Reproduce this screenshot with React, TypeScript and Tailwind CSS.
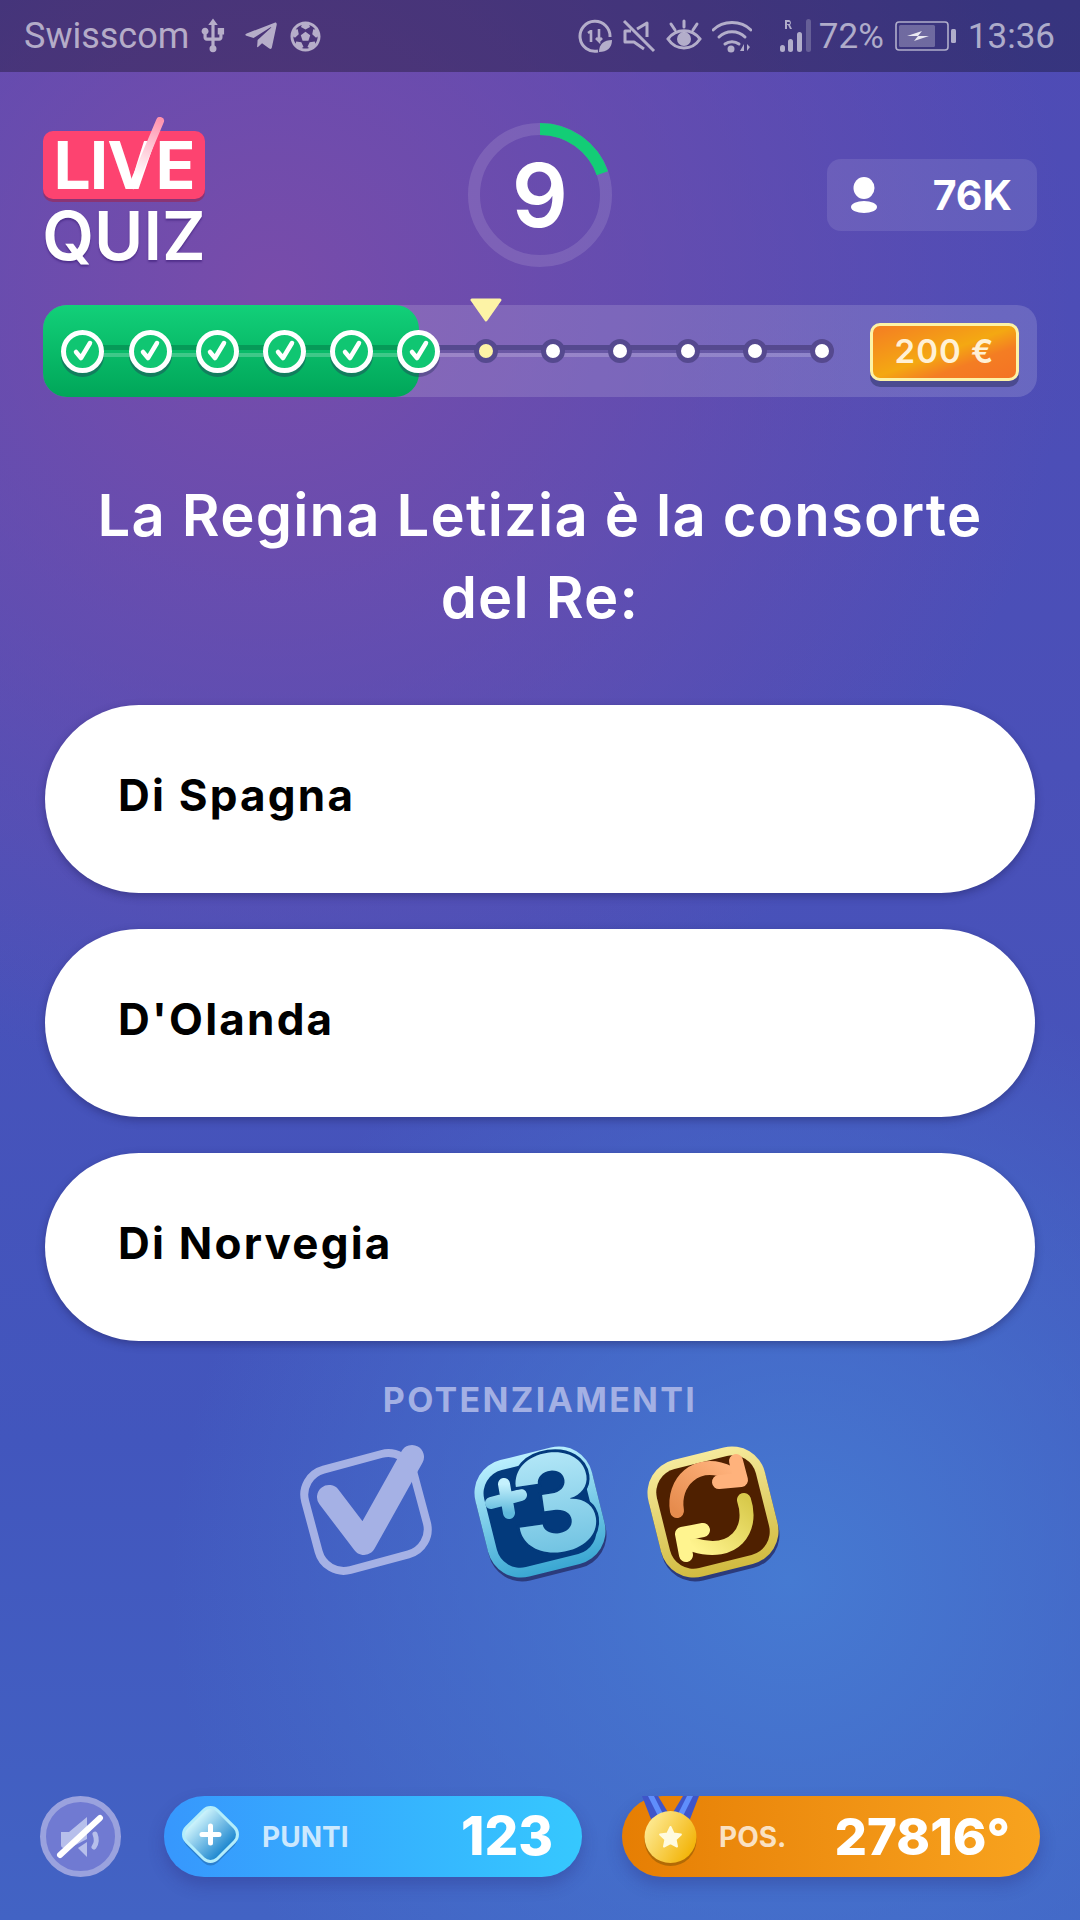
import { FaTelegramPlane, FaFutbol } from "react-icons/fa";
import { MdUsb } from "react-icons/md";

const doneSteps = [0, 1, 2, 3, 4, 5];
const openSteps = [6, 7, 8, 9, 10, 11];
const answers = ["Di Spagna", "D'Olanda", "Di Norvegia"];

function StatusBar() {
  return (
    <div className="h-[72px] shrink-0 bg-black/30 flex items-center pl-[24px] pr-[25px] text-white/60 font-['Roboto',sans-serif] text-[36px]">
      <span className="leading-none">Swisscom</span>
      <MdUsb className="ml-[5px] text-[38px] -mx-[1px]" />
      <FaTelegramPlane className="ml-[12px] text-[36px]" />
      <FaFutbol className="ml-[11px] text-[31px]" />
      <div className="ml-auto flex items-center text-[35px]">
        <svg width="35" height="35" viewBox="0 0 35 35" fill="none" stroke="currentColor" strokeWidth="3">
          <path d="M20 32A15 15 0 1 1 32 18" />
          <path d="M13 12l-3 2M13 11v12M21 10v12l-3-3M21 22l3-3" strokeWidth="2.6" />
          <path d="M21 33c0-8 5-12 13-12 0 8-5 12-13 12z" fill="currentColor" stroke="none" />
        </svg>
        <svg className="ml-[9px]" width="34" height="34" viewBox="0 0 34 34" fill="none" stroke="currentColor" strokeWidth="3">
          <path d="M2 2l30 30" />
          <path d="M9 12H3v11h9l10 7M25 18V4l-10 6" strokeLinejoin="round" />
        </svg>
        <svg className="ml-[10px]" width="36" height="34" viewBox="0 0 36 34" fill="none" stroke="currentColor" strokeWidth="3">
          <path d="M2 20c8-11 24-11 32 0-8 12-24 12-32 0z" />
          <circle cx="18" cy="20" r="7" fill="currentColor" stroke="none" />
          <path d="M18 2v6M5 5l4 6M31 5l-4 6" strokeLinecap="round" />
        </svg>
        <svg className="ml-[10px]" width="40" height="34" viewBox="0 0 40 34" fill="none" stroke="currentColor" strokeWidth="3" strokeLinecap="round">
          <path d="M1 11c10-10 28-10 38 0" />
          <path d="M7 18c7-7 19-7 26 0" />
          <path d="M13 25c4-3 10-3 14 0" />
          <circle cx="19" cy="30" r="3.5" fill="currentColor" stroke="none" />
          <path d="M28 32l4-7v7zM35 25v7l3-4z" fill="currentColor" stroke="none" />
        </svg>
        <svg className="ml-[27px]" width="36" height="34" viewBox="0 0 36 34" fill="currentColor">
          <rect x="1" y="26" width="5" height="7" rx="2.5" />
          <rect x="9" y="20" width="5" height="13" rx="2.5" />
          <rect x="18" y="13" width="5" height="20" rx="2.5" />
          <rect x="27" y="0" width="5" height="33" rx="2.5" opacity="0.35" />
          <path d="M6 1h4a3 3 0 0 1 1 5l2 4h-2l-2-4H8v4H6zM8 3v2h2a1 1 0 0 0 0-2z" />
        </svg>
        <span className="ml-[4px] leading-none">72%</span>
        <svg className="ml-[11px]" width="61" height="30" viewBox="0 0 61 30" fill="none">
          <rect x="1" y="1" width="52" height="28" rx="3" stroke="currentColor" strokeWidth="1.6" />
          <rect x="4" y="4" width="36" height="22" rx="1.5" fill="currentColor" opacity="0.45" />
          <rect x="56" y="8" width="5" height="14" rx="1.5" fill="currentColor" />
          <path d="M12 15l15-5-4 5 11 0-15 5 4-5z" fill="#ffffff" opacity="0.85" />
        </svg>
        <span className="ml-[12px] leading-none">13:36</span>
      </div>
    </div>
  );
}

function Logo() {
  return (
    <div className="relative -my-[6px] w-[162px] h-[156px] pt-[14px] flex flex-col items-center text-white font-bold">
      <div className="w-full h-[68px] rounded-[10px] bg-[#fd4370] shadow-[0_3px_0_#8b3474] flex items-center justify-center text-[66px] leading-none tracking-[-1px]">
        LIVE
      </div>
      <div className="mt-[4px] text-[67px] leading-[66px] font-semibold tracking-[0px] [text-shadow:0_2px_2px_rgba(50,20,110,0.5)]">QUIZ</div>
      <svg className="absolute left-[80px] top-0" width="50" height="80" viewBox="0 0 50 80" fill="none">
        <defs>
          <linearGradient id="tick" x1="38" y1="0" x2="10" y2="70" gradientUnits="userSpaceOnUse">
            <stop offset="0" stopColor="#ff8fab" />
            <stop offset="0.85" stopColor="#ffffff" />
          </linearGradient>
        </defs>
        <path d="M37 4L10 68" stroke="url(#tick)" strokeWidth="8" strokeLinecap="round" />
      </svg>
    </div>
  );
}

function Timer() {
  return (
    <div className="relative w-[144px] h-[144px] flex items-center justify-center">
      <svg className="absolute inset-0 -rotate-90" width="144" height="144" viewBox="0 0 144 144" fill="none">
        <circle cx="72" cy="72" r="66" stroke="#ffffff" strokeOpacity="0.12" strokeWidth="12" />
        <circle cx="72" cy="72" r="66" stroke="#13cd76" strokeWidth="12" strokeDasharray="81.4 400" />
      </svg>
      <span className="text-white text-[88px] leading-none font-semibold">9</span>
    </div>
  );
}

function DoneStep() {
  return (
    <div className="w-[67.2px] flex justify-center">
      <div className="w-[43px] h-[43px] rounded-full border-[5px] border-white bg-[#10c672] shadow-[0_4px_0_rgba(40,50,90,0.4)] flex items-center justify-center">
        <svg width="26" height="26" viewBox="0 0 26 26" fill="none" stroke="#ffffff" strokeWidth="4.5" strokeLinecap="round" strokeLinejoin="round">
          <path d="M6 14l5 6 9-15" />
        </svg>
      </div>
    </div>
  );
}

function OpenStep({ current }: { current: boolean }) {
  return (
    <div className="w-[67.2px] flex justify-center">
      <div className={current ? "w-[24px] h-[24px] rounded-full border-[5px] border-[#55498f] bg-[#fdf3a6]" : "w-[24px] h-[24px] rounded-full border-[5px] border-[#55498f] bg-white"} />
    </div>
  );
}

function ProgressBar() {
  return (
    <div className="relative mt-[38px] mx-[43px] h-[92px] rounded-l-[24px] rounded-r-[20px] bg-white/15 flex items-center pl-[6.4px] pr-[18px]">
      <div className="absolute left-0 top-0 bottom-0 w-[376px] rounded-[24px] bg-gradient-to-b from-[#12d079] to-[#01a659]">
        <div className="absolute left-[40px] right-0 top-[40px] h-[12px] bg-[linear-gradient(#069a58_0_5px,transparent_5px_8px,rgba(255,255,255,0.22)_8px_12px)]" />
      </div>
      <div className="absolute left-[376px] w-[402px] top-[40px] h-[12px] bg-[linear-gradient(#55498f_0_5px,rgba(85,73,143,0.5)_5px_8px,rgba(255,255,255,0.2)_8px_12px)]" />
      <svg className="absolute left-[426px] -top-[7px]" width="34" height="24" viewBox="0 0 34 24">
        <path d="M3 2h28L17 22z" fill="#fdf3a6" stroke="#fdf3a6" strokeWidth="3" strokeLinejoin="round" />
      </svg>
      <div className="relative flex items-center">
        {doneSteps.map((s) => (
          <DoneStep key={s} />
        ))}
        {openSteps.map((s) => (
          <OpenStep key={s} current={s === 6} />
        ))}
      </div>
      <div className="relative ml-auto mt-[2px] w-[149px] h-[58px] rounded-[10px] border-[3px] border-[#fdf3a6] bg-[linear-gradient(160deg,#f47d23_0%,#f4a812_50%,#f47d23_70%,#f47324_100%)] shadow-[0_6px_0_#4b4a90] flex items-center justify-center text-[#fff1d6] text-[33px] font-semibold tracking-[1px]">
        200 €
      </div>
    </div>
  );
}

function CheckPower() {
  return (
    <svg width="135" height="135" viewBox="0 0 135 135" fill="none" stroke="#a5b1e5" className="overflow-visible">
      <rect x="-56" y="-52" width="112" height="104" rx="26" transform="translate(67 67) rotate(-15)" strokeWidth="8" />
      <path d="M30 52L65 98L113 12" strokeWidth="24" strokeLinecap="round" strokeLinejoin="round" />
    </svg>
  );
}

function PlusThreePower() {
  return (
    <svg width="135" height="140" viewBox="0 0 135 140" fill="none" className="overflow-visible">
      <defs>
        <linearGradient id="blueRim" x1="0" y1="0" x2="0" y2="1">
          <stop offset="0" stopColor="#b9effe" />
          <stop offset="1" stopColor="#3aa7d2" />
        </linearGradient>
        <linearGradient id="blueNum" x1="0" y1="0" x2="0" y2="1">
          <stop offset="0" stopColor="#c5f1fd" />
          <stop offset="1" stopColor="#5fb9dc" />
        </linearGradient>
      </defs>
      <g transform="translate(67 67) rotate(-14)">
        <rect x="-60" y="-56" width="120" height="120" rx="34" fill="#2b3b7c" />
        <rect x="-60" y="-60" width="120" height="120" rx="34" fill="url(#blueRim)" />
        <rect x="-51" y="-50" width="102" height="100" rx="24" fill="#033a7c" />
      </g>
      <path d="M18 58L48 50M31 39L36 68" stroke="url(#blueNum)" strokeWidth="12" strokeLinecap="round" />
      <text x="82" y="106" transform="rotate(-8 82 58)" textAnchor="middle" fontFamily="Inter, sans-serif" fontWeight="800" fontSize="134" fill="url(#blueNum)" stroke="#033a7c" strokeWidth="6" paintOrder="stroke">3</text>
    </svg>
  );
}

function RefreshPower() {
  return (
    <svg width="135" height="140" viewBox="0 0 135 140" fill="none" className="overflow-visible">
      <defs>
        <linearGradient id="goldRim" x1="0" y1="0" x2="0" y2="1">
          <stop offset="0" stopColor="#f6ea9c" />
          <stop offset="1" stopColor="#d1bb40" />
        </linearGradient>
        <linearGradient id="orangeArrow" x1="0" y1="1" x2="1" y2="0">
          <stop offset="0" stopColor="#e68c4e" />
          <stop offset="1" stopColor="#ffb27c" />
        </linearGradient>
        <linearGradient id="yellowArrow" x1="1" y1="0" x2="0" y2="1">
          <stop offset="0" stopColor="#d9ca4c" />
          <stop offset="1" stopColor="#fff48f" />
        </linearGradient>
      </defs>
      <g transform="translate(67 67) rotate(-14)">
        <rect x="-60" y="-56" width="120" height="120" rx="34" fill="#2b3b7c" />
        <rect x="-60" y="-60" width="120" height="120" rx="34" fill="url(#goldRim)" />
        <rect x="-51" y="-51" width="102" height="102" rx="24" fill="#4f2000" />
      </g>
      <path d="M31 66C26 38 50 12 84 28" stroke="url(#orangeArrow)" strokeWidth="14" strokeLinecap="round" />
      <path d="M90 16L95 35L73 37" stroke="#ffb27c" strokeWidth="14" strokeLinecap="round" strokeLinejoin="round" />
      <path d="M98 55C108 85 88 112 48 100" stroke="url(#yellowArrow)" strokeWidth="14" strokeLinecap="round" />
      <path d="M57 85L36 89L40 110" stroke="#fff48f" strokeWidth="14" strokeLinecap="round" strokeLinejoin="round" />
    </svg>
  );
}

function MuteButton() {
  return (
    <div className="w-[81px] h-[81px] rounded-full border-[6px] border-[#9aa2de] bg-[#707ad2] flex items-center justify-center shrink-0">
      <svg width="50" height="50" viewBox="0 0 50 50" fill="none">
        <path d="M5 20h8L31 5v22L14 36H8a3 3 0 0 1-3-3z" fill="#b7bfeb" />
        <path d="M22 36l9-6v15z" fill="#b7bfeb" />
        <path d="M39 22c2 5 2 9-1 13" stroke="#b7bfeb" strokeWidth="5" strokeLinecap="round" />
        <path d="M4 43L44 6" stroke="#ffffff" strokeWidth="6" strokeLinecap="round" />
      </svg>
    </div>
  );
}

function GemIcon() {
  return (
    <svg width="57" height="64" viewBox="0 0 57 64" fill="none" className="shrink-0 mt-[3px]">
      <defs>
        <linearGradient id="gem" x1="0" y1="0" x2="1" y2="0">
          <stop offset="0" stopColor="#d3f7fd" />
          <stop offset="1" stopColor="#1a85cf" />
        </linearGradient>
      </defs>
      <rect x="6.5" y="10.5" width="44" height="44" rx="10" transform="rotate(45 28.5 32.5)" fill="#2b7fcf" />
      <rect x="6.5" y="6.5" width="44" height="44" rx="10" transform="rotate(45 28.5 28.5)" fill="url(#gem)" stroke="#b3edfb" strokeWidth="3" />
      <path d="M28.5 20v17M20 28.5h17" stroke="#ffffff" strokeWidth="5" strokeLinecap="round" />
    </svg>
  );
}

function MedalIcon() {
  return (
    <svg width="57" height="81" viewBox="0 0 57 81" fill="none" className="shrink-0">
      <defs>
        <linearGradient id="coin" x1="0" y1="0" x2="1" y2="0.6">
          <stop offset="0" stopColor="#fff2a8" />
          <stop offset="1" stopColor="#f3b50b" />
        </linearGradient>
      </defs>
      <path d="M0 0h16l22 36H14z" fill="#3f55c9" />
      <path d="M57 0H41L19 36h24z" fill="#3f55c9" />
      <path d="M6 0h6l15 30h-6zM51 0h-6L30 30h6z" fill="#5f8efc" />
      <circle cx="28.5" cy="44" r="26" fill="#b36a05" />
      <circle cx="28.5" cy="41" r="26" fill="url(#coin)" />
      <path d="M28.5 31l3.2 6.6 7.2.9-5.3 4.9 1.4 7.1-6.5-3.5-6.5 3.5 1.4-7.1-5.3-4.9 7.2-.9z" fill="#fffbe0" stroke="#fffbe0" strokeWidth="2" strokeLinejoin="round" />
    </svg>
  );
}

export default function App() {
  return (
    <div className="w-[1080px] h-[1920px] overflow-hidden flex flex-col font-['Inter',sans-serif] bg-[radial-gradient(circle_at_270px_290px,#784caa_0%,rgba(120,76,170,0)_800px),radial-gradient(circle_at_790px_1580px,#467ad2_0%,rgba(70,122,210,0)_620px),linear-gradient(180deg,#4f4bb5_0%,#4a50b8_40%,#4256bd_75%,#4263c4_100%)]">
      <StatusBar />

      <div className="mt-[51px] h-[144px] mx-[43px] grid grid-cols-[1fr_144px_1fr] items-center">
        <Logo />
        <Timer />
        <div className="justify-self-end w-[210px] h-[72px] rounded-[14px] bg-white/10 flex items-center justify-between pl-[24px] pr-[25px] text-white">
          <svg width="26" height="36" viewBox="0 0 26 36" fill="#ffffff">
            <ellipse cx="13" cy="11" rx="10.5" ry="11" />
            <ellipse cx="13" cy="30" rx="13" ry="6" />
          </svg>
          <span className="text-[41px] leading-none font-bold">76K</span>
        </div>
      </div>

      <ProgressBar />

      <h1 className="mt-[77px] px-[60px] text-center text-white text-[58px] leading-[82px] font-semibold tracking-[1.2px]">
        La Regina Letizia è la consorte
        <br />
        del Re:
      </h1>

      <div className="mt-[67px] mx-[45px] flex flex-col gap-[36px]">
        {answers.map((a) => (
          <div key={a} className="h-[188px] rounded-[94px] bg-white shadow-[0_3px_8px_rgba(30,30,90,0.45)] flex items-center pl-[73px] pb-[8px] text-black text-[44px] font-bold tracking-[2.2px]">
            {a}
          </div>
        ))}
      </div>

      <div className="mt-[38px] text-center text-[#a3b0e4] text-[34px] leading-[42px] font-bold tracking-[2.3px]">POTENZIAMENTI</div>
      <div className="mt-[24px] flex justify-center gap-[38.5px]">
        <CheckPower />
        <PlusThreePower />
        <RefreshPower />
      </div>

      <div className="mt-auto mb-[43px] ml-[40px] flex items-center">
        <MuteButton />
        <div className="ml-[43px] w-[418px] h-[81px] rounded-full bg-gradient-to-r from-[#3797fd] to-[#36c8fe] shadow-[0_8px_16px_rgba(40,40,120,0.3)] flex items-center pl-[18px] pr-[29px] text-white">
          <GemIcon />
          <span className="ml-[23px] text-[28px] font-bold text-white/75">PUNTI</span>
          <span className="ml-auto text-[53px] leading-none font-extrabold">123</span>
        </div>
        <div className="ml-[40px] w-[418px] h-[81px] rounded-full bg-gradient-to-r from-[#e67e03] to-[#f8a31e] shadow-[0_8px_16px_rgba(40,40,120,0.3)] flex items-center pl-[20px] pr-[30px] text-white">
          <MedalIcon />
          <span className="ml-[20px] text-[28px] font-bold text-white/75">POS.</span>
          <span className="ml-auto text-[51px] leading-none font-extrabold">27816°</span>
        </div>
      </div>
    </div>
  );
}
